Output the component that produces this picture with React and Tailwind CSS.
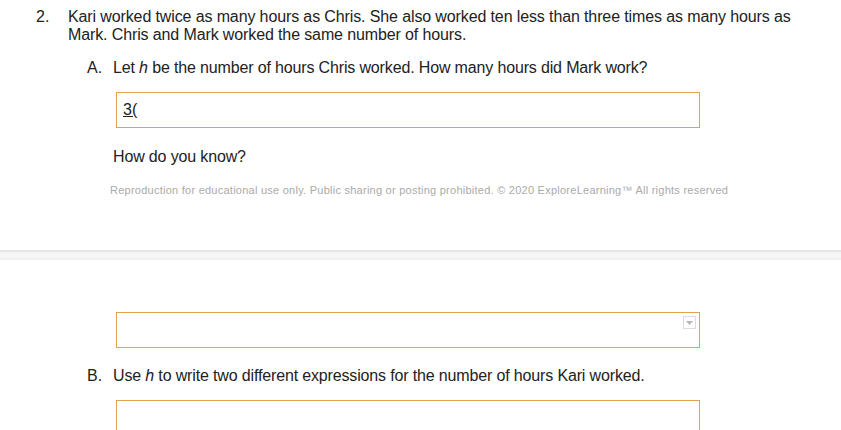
const answerBox = 'h-[36px] w-[584px] border border-[#e3a04e] bg-white'

function AnswerBox({ children, dropdown = false }) {
    return (
        <div className={`relative ml-[116px] ${answerBox}`}>
            {children}
            {dropdown && (
                <div className="absolute right-[3px] top-[3px] flex h-[13px] w-[13px] items-center justify-center border border-[#dcdcdc] bg-white">
                    <svg width="7" height="4" viewBox="0 0 7 4">
                        <path d="M0 0h7L3.5 4z" fill="#b5b5b5" />
                    </svg>
                </div>
            )}
        </div>
    )
}

export default function App() {
    return (
        <div
            className="h-[430px] w-[841px] overflow-hidden bg-white text-[16px] leading-[18px] text-[#222]"
            style={{ fontFamily: '"Liberation Sans", Arial, sans-serif' }}
        >
            <div className="pt-[8px]">
                <div className="flex">
                    <span className="w-[68px] pl-[36px]">2.</span>
                    <p className="w-[740px] tracking-[-0.12px]">
                        Kari worked twice as many hours as Chris. She also worked ten less than three times as many hours as Mark. Chris and Mark worked the same number of hours.
                    </p>
                </div>

                <div className="mt-[15px] flex">
                    <span className="w-[113px] pl-[87px]">A.</span>
                    <p className="tracking-[-0.15px]">
                        Let <i>h</i> be the number of hours Chris worked. How many hours did Mark work?
                    </p>
                </div>

                <div className="mt-[15px]">
                    <AnswerBox>
                        <span className="absolute left-[6px] top-[8px] underline">3(</span>
                    </AnswerBox>
                </div>

                <p className="ml-[113px] mt-[20px] tracking-[-0.15px]">How do you know?</p>

                <p className="ml-[110px] mt-[18px] text-[11px] leading-[13px] tracking-[0.25px] text-[#aaaaaa]">
                    Reproduction for educational use only. Public sharing or posting prohibited. © 2020 ExploreLearning™ All rights reserved
                </p>
            </div>

            <div className="mt-[53px] h-[10px] border-t-2 border-b-2 border-t-[#e6e6e6] border-b-[#efefef] bg-[#f6f6f6]" />

            <div className="pt-[52px]">
                <AnswerBox dropdown />

                <div className="mt-[19px] flex">
                    <span className="w-[113px] pl-[87px]">B.</span>
                    <p className="tracking-[-0.15px]">
                        Use <i>h</i> to write two different expressions for the number of hours Kari worked.
                    </p>
                </div>

                <div className="mt-[15px]">
                    <AnswerBox />
                </div>
            </div>
        </div>
    )
}
